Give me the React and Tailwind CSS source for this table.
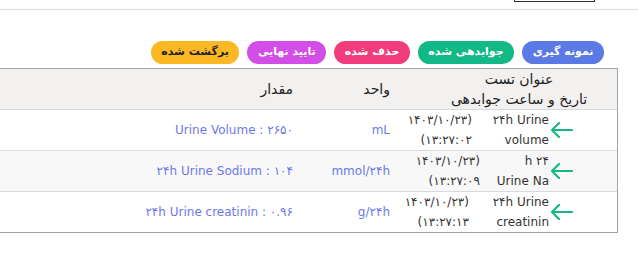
import React from "react";

// وضعیت‌ها - دکمه‌های فیلتر بالای جدول
const STATUS_PILLS = [
  { label: "نمونه گیری", cls: "bg-[#5b7ae6] text-white" },
  { label: "جوابدهی شده", cls: "bg-[#12b886] text-white" },
  { label: "حذف شده", cls: "bg-[#f23d7c] text-white" },
  { label: "تایید نهایی", cls: "bg-[#d24ee6] text-white" },
  { label: "برگشت شده", cls: "bg-[#fbb825] text-[#222]" },
];

const ROWS = [
  {
    name: ["۲۴h Urine", "volume"],
    date: ["(۱۴۰۳/۱۰/۲۳", "۱۳:۲۷:۰۲)"],
    datePad: "pr-[9px]",
    unit: "mL",
    value: "Urine Volume : ۲۶۵۰",
    bg: "bg-white",
  },
  {
    name: ["۲۴ h", "Urine Na"],
    date: ["(۱۴۰۳/۱۰/۲۳", "۱۳:۲۷:۰۹)"],
    datePad: "pr-[1px]",
    unit: "mmol/۲۴h",
    value: "۲۴h Urine Sodium : ۱۰۴",
    bg: "bg-[#f8f8f8]",
  },
  {
    name: ["۲۴h Urine", "creatinin"],
    date: ["(۱۴۰۳/۱۰/۲۳", "۱۳:۲۷:۱۳)"],
    datePad: "pr-[12px]",
    unit: "g/۲۴h",
    value: "۲۴h Urine creatinin : ۰.۹۶",
    bg: "bg-white",
  },
];

function BackArrow() {
  return (
    <svg width="23" height="16" viewBox="0 0 23 16" fill="none">
      <path
        d="M22 8H2M9 1L2 8l7 7"
        stroke="#14b886"
        strokeWidth="2.2"
        strokeLinecap="round"
        strokeLinejoin="round"
      />
    </svg>
  );
}

export default function App() {
  return (
    <div className="w-[638px] h-[265px] bg-white overflow-hidden font-['DejaVu_Sans',sans-serif] text-[12px] text-[#333]">
      {/* نوار بالا */}
      <div className="flex justify-end pr-[43px]">
        <div className="w-[81px] h-[2px] border-x border-b border-[#333]" />
      </div>
      <div className="mt-[7px] h-px bg-[#dcdcdc]" />

      {/* دکمه‌های وضعیت */}
      <div dir="rtl" className="flex gap-[8px] pr-[34px] pt-[31px]">
        {STATUS_PILLS.map((p) => (
          <span
            key={p.label}
            className={`h-[23px] px-[10.5px] rounded-full flex items-center font-bold text-[11px] ${p.cls}`}
          >
            {p.label}
          </span>
        ))}
      </div>

      {/* جدول */}
      <div dir="rtl" className="mt-[4px] mr-[20px] border-y border-r border-[#a3a3a3]">
        <div className="flex bg-[#f2f1ef] border-b border-[#d8d8e0] text-[14px] text-[#222] leading-[20px]">
          <div className="w-[222px] shrink-0 pl-[26px] text-center whitespace-nowrap">
            <div>عنوان تست</div>
            <div>تاریخ و ساعت جوابدهی</div>
          </div>
          <div className="w-[95px] shrink-0 pr-[5px] flex items-center">واحد</div>
          <div className="w-[200px] shrink-0 pr-[7px] flex items-center">مقدار</div>
          <div className="flex-1" />
        </div>

        {ROWS.map((r, i) => (
          <div
            key={i}
            className={`flex leading-[20px] ${r.bg} ${i < ROWS.length - 1 ? "border-b border-[#d8d8e0]" : ""}`}
          >
            <div className="w-[68px] shrink-0 pr-[44px] flex items-center">
              <BackArrow />
            </div>
            <div className="w-[68px] shrink-0 whitespace-nowrap">
              <div>{r.name[0]}</div>
              <div>{r.name[1]}</div>
            </div>
            <div className={`w-[86px] shrink-0 whitespace-nowrap tracking-[0.5px] ${r.datePad}`}>
              <div>{r.date[0]}</div>
              <div>{r.date[1]}</div>
            </div>
            <div className="w-[95px] shrink-0 pr-[5px] flex items-center text-[#6d78e8] whitespace-nowrap">
              {r.unit}
            </div>
            <div className="w-[200px] shrink-0 pr-[7px] flex items-center text-[#6d78e8] whitespace-nowrap">
              {r.value}
            </div>
            <div className="flex-1" />
          </div>
        ))}
      </div>
    </div>
  );
}
